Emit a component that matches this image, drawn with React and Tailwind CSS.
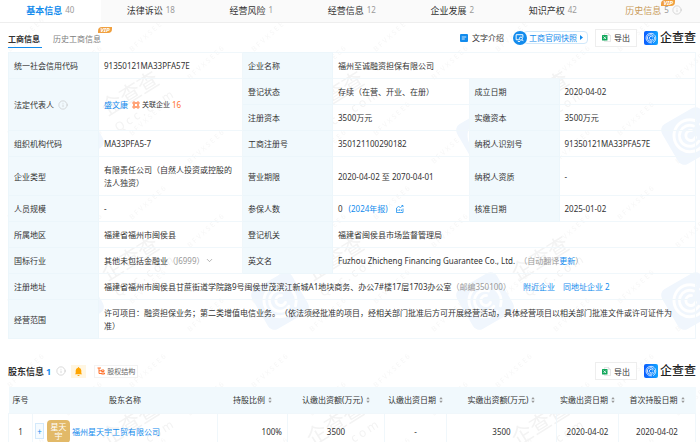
import { ChevronDown, Info } from "lucide-react";

const tabs = [
  { name: "基本信息", count: 40, active: true },
  { name: "法律诉讼", count: 18 },
  { name: "经营风险", count: 1 },
  { name: "经营信息", count: 12 },
  { name: "企业发展", count: 2 },
  { name: "知识产权", count: 42 },
  { name: "历史信息", count: 5, vip: true },
];

const holderColumns = [
  { name: "序号", width: "w-6" },
  { name: "股东名称", width: "w-[185px]" },
  { name: "持股比例", width: "w-[70px]", sortable: true },
  { name: "认缴出资额(万元)", width: "w-[97px]", sortable: true },
  { name: "认缴出资日期", width: "w-[62px]", sortable: true },
  { name: "实缴出资额(万元)", width: "w-[110px]", sortable: true },
  { name: "实缴出资日期", width: "w-[62px]", sortable: true },
  { name: "首次持股日期", width: "", sortable: true },
];

const VipBadge = () => (
  <span className="flex h-[6px] w-[14px] items-center justify-center rounded-tl-sm rounded-br-sm bg-[#f0a040] text-[6px] leading-none font-bold text-white italic">
    VIP
  </span>
);

const InfoIcon = () => (
  <Info className="size-[10px] shrink-0 text-[#c4c4c4]" strokeWidth={1.5} />
);

const LogoMark = () => (
  <svg viewBox="0 0 28 28" className="size-[14px]" fill="none" aria-hidden="true">
    <defs>
      <linearGradient id="mark" x1="0" y1="0" x2="1" y2="0">
        <stop offset="0" stopColor="#0a5cff" />
        <stop offset="1" stopColor="#12a5ff" />
      </linearGradient>
    </defs>
    <rect width="28" height="28" rx="4" fill="url(#mark)" />
    <g stroke="#fff" strokeWidth="1.6" strokeLinecap="round">
      <path d="M20 6.500A9.800 9.800 0 1 0 15 23.800" />
      <path d="M19 10A6.800 6.800 0 1 0 15 20.700" />
      <path d="M17.500 12A3.800 3.800 0 1 0 17.500 16.500" />
      <path d="M22 9C25 14 23.500 20 19 22.800" />
      <path d="M17.500 20C20.500 18.500 21.500 16 21 13" />
    </g>
  </svg>
);

const Brand = () => (
  <a href="#home" className="flex items-center gap-[2px] text-[#222]">
    <LogoMark />
    <span className="text-[12px] leading-[14px] font-medium">企查查</span>
  </a>
);

const ExportButton = () => (
  <button
    type="button"
    className="flex h-[18px] w-[42px] items-center justify-center gap-[3px] border border-[#eee] bg-white"
  >
    <svg viewBox="0 0 18 18" className="size-[9px]" aria-hidden="true">
      <path d="M5 1h8l4 4v12H5z" fill="#fff" stroke="#cfcfcf" />
      <path d="M13 1v4h4" fill="none" stroke="#cfcfcf" />
      <rect y="4" width="11" height="11" rx="1" fill="#12a75c" />
      <path d="m3 7 5 5M8 7l-5 5" stroke="#fff" strokeWidth="1.6" />
    </svg>
    <span>导出</span>
  </button>
);

const Watermark = () => (
  <svg
    className="pointer-events-none absolute inset-0 size-full"
    aria-hidden="true"
  >
    <defs>
      <pattern id="brand" x="75" y="54" width="205" height="165" patternUnits="userSpaceOnUse">
        <g transform="translate(58 44) rotate(-32)" fill="#f3f3f3" textAnchor="middle">
          <text y="2" fontSize="21">企查查</text>
          <text x="4" y="21" fontSize="12" letterSpacing="3">Qcc.com</text>
        </g>
      </pattern>
      <pattern id="stamp" x="177" y="54" width="205" height="165" patternUnits="userSpaceOnUse">
        <g transform="translate(103 82) rotate(-30)">
          <rect x="-23" y="-23" width="46" height="46" rx="7" fill="#f0f6fd" />
          <g fill="none" stroke="#fff" strokeWidth="3" strokeLinecap="round">
            <path d="M12-11A16 16 0 1 0 5 15" />
            <path d="M8-7A10.500 10.500 0 1 0 5 9" />
            <path d="M4-4A5 5 0 1 0 4 4" />
            <path d="M15-5A16 16 0 0 1 11 12" />
          </g>
        </g>
      </pattern>
      <pattern id="code" width="122" height="84" patternUnits="userSpaceOnUse">
        <g fill="#f6f6f6" fontSize="7" letterSpacing="2">
          <text transform="translate(10 52) rotate(-42)">BFVXSEE6</text>
          <text transform="translate(68 80) rotate(-42)">BFVXSEE6</text>
        </g>
      </pattern>
    </defs>
    <rect width="100%" height="100%" fill="url(#code)" />
    <rect y="53" width="100%" height="286" fill="url(#stamp)" />
    <rect y="53" width="100%" height="286" fill="url(#brand)" />
    <rect y="412" width="100%" height="100%" fill="url(#brand)" />
  </svg>
);

const Label = ({ children, ...props }) => (
  <th
    scope="row"
    className="border border-[#ecf6fb] bg-[#f1f9fd] px-[5px] py-[6px] text-left font-normal"
    {...props}
  >
    {children}
  </th>
);

const Value = ({ children, ...props }) => (
  <td className="border border-[#f0f7fb] py-[6px] pr-2 pl-[5px]" {...props}>
    {children}
  </td>
);

const SortArrows = () => (
  <svg viewBox="0 0 8 14" className="h-[6px] w-[4px]" fill="#999" aria-hidden="true">
    <path d="M4 0 8 5H0zM4 14 0 9h8z" />
  </svg>
);

const CompanyTable = () => (
  <table className="w-full table-fixed border-collapse">
    <colgroup>
      <col className="w-[90px]" />
      <col className="w-[144px]" />
      <col className="w-[90px]" />
      <col />
      <col className="w-[90px]" />
      <col />
    </colgroup>
    <tbody>
      <tr>
        <Label>统一社会信用代码</Label>
        <Value>91350121MA33PFA57E</Value>
        <Label>企业名称</Label>
        <Value colSpan={3}>福州至诚融资担保有限公司</Value>
      </tr>
      <tr>
        <Label rowSpan={2}>
          <span className="flex items-center gap-1">
            法定代表人 <InfoIcon />
          </span>
        </Label>
        <Value rowSpan={2}>
          <div className="flex items-center gap-1">
            <a href="#person" className="text-[#128bed]">盛文康</a>
            <a href="#related" className="flex items-center gap-[2px] text-[7px]">
              <svg viewBox="0 0 16 16" className="size-[8px]" fill="none" stroke="#ff722d" strokeWidth="1.6" aria-hidden="true">
                <path d="M2 2h4v4H2zM10 2h4v4h-4zM2 10h4v4H2zM10 10h4v4h-4zM6 4h4M6 12h4M4 6v4M12 6v4" />
              </svg>
              <span>关联企业</span>
              <span className="text-[8px] text-[#ff722d]">16</span>
            </a>
          </div>
        </Value>
        <Label>登记状态</Label>
        <Value>存续（在营、开业、在册）</Value>
        <Label>成立日期</Label>
        <Value>2020-04-02</Value>
      </tr>
      <tr>
        <Label>注册资本</Label>
        <Value>3500万元</Value>
        <Label>实缴资本</Label>
        <Value>3500万元</Value>
      </tr>
      <tr>
        <Label>组织机构代码</Label>
        <Value>MA33PFA5-7</Value>
        <Label>工商注册号</Label>
        <Value>350121100290182</Value>
        <Label>纳税人识别号</Label>
        <Value>91350121MA33PFA57E</Value>
      </tr>
      <tr>
        <Label>企业类型</Label>
        <Value>有限责任公司（自然人投资或控股的法人独资）</Value>
        <Label>营业期限</Label>
        <Value>2020-04-02 至 2070-04-01</Value>
        <Label>纳税人资质</Label>
        <Value>-</Value>
      </tr>
      <tr>
        <Label>人员规模</Label>
        <Value>-</Value>
        <Label>参保人数</Label>
        <Value>
          <div className="flex items-center">
            <span>0</span>
            <a href="#report" className="ml-[6px] text-[#128bed]">(2024年报)</a>
            <svg viewBox="0 0 16 16" className="ml-2 size-[8px]" fill="none" stroke="#128bed" strokeWidth="1.5" aria-hidden="true">
              <path d="M1 6v9h13V7M4 12V9M7.500 12V8M11 12V9M1 6l4-3 4 2 5-4M11 1h3v3" />
            </svg>
          </div>
        </Value>
        <Label>核准日期</Label>
        <Value>2025-01-02</Value>
      </tr>
      <tr>
        <Label>所属地区</Label>
        <Value>福建省福州市闽侯县</Value>
        <Label>登记机关</Label>
        <Value colSpan={3}>福建省闽侯县市场监督管理局</Value>
      </tr>
      <tr>
        <Label>国标行业</Label>
        <Value>
          <div className="flex items-center">
            其他未包括金融业
            <span className="text-[#999]">（J6999）</span>
            <ChevronDown className="size-[9px] text-[#999]" strokeWidth={2} />
          </div>
        </Value>
        <Label>英文名</Label>
        <Value colSpan={3}>
          Fuzhou Zhicheng Financing Guarantee Co., Ltd.
          <span className="ml-1 text-[#999]">
            （自动翻译<a href="#update" className="text-[#128bed]">更新</a>）
          </span>
        </Value>
      </tr>
      <tr>
        <Label>注册地址</Label>
        <Value colSpan={5}>
          福建省福州市闽侯县甘蔗街道学院路9号闽侯世茂滨江新城A1地块商务、办公7#楼17层1703办公室
          <span className="text-[#999]">（邮编350100）</span>
          <a href="#nearby" className="ml-3 text-[#128bed]">附近企业</a>
          <a href="#same-address" className="ml-2 text-[#128bed]">同地址企业 2</a>
        </Value>
      </tr>
      <tr>
        <Label>经营范围</Label>
        <Value colSpan={5}>
          <p className="pr-1">
            许可项目：融资担保业务；第二类增值电信业务。（依法须经批准的项目，经相关部门批准后方可开展经营活动，具体经营项目以相关部门批准文件或许可证件为准）
          </p>
        </Value>
      </tr>
    </tbody>
  </table>
);

const HolderTable = () => (
  <table className="w-full table-fixed border-collapse text-center">
    <thead className="bg-[#f1f9fd]">
      <tr className="h-[26px]">
        {holderColumns.map((col) => (
          <th key={col.name} scope="col" className={`${col.width} p-0 font-normal whitespace-nowrap`}>
            <span className="inline-flex items-center gap-[3px]">
              {col.name}
              {col.sortable && <SortArrows />}
            </span>
          </th>
        ))}
      </tr>
    </thead>
    <tbody>
      <tr className="h-9 *:border *:border-[#f0f7fb]">
        <td>1</td>
        <td>
          <div className="flex items-center pl-[2px]">
            <button
              type="button"
              aria-label="展开"
              className="flex h-4 w-[9px] items-center justify-center border border-[#d3e9fb] bg-[#f5fbff] text-[#128bed]"
            >
              +
            </button>
            <span className="ml-[3px] flex size-[23px] items-center justify-center rounded-sm bg-[#e2b968] text-[8px] leading-[9px] text-white">
              <span className="w-4">星天宇</span>
            </span>
            <a href="#holder" className="ml-[2px] text-[#128bed]">福州星天宇工贸有限公司</a>
          </div>
        </td>
        <td className="pr-[5px] text-right">100%</td>
        <td>3500</td>
        <td>-</td>
        <td>3500</td>
        <td>2020-04-02</td>
        <td>2020-04-02</td>
      </tr>
    </tbody>
  </table>
);

export default function App() {
  return (
    <div className="relative h-screen overflow-hidden bg-white font-['Noto_Sans','Noto_Sans_CJK_SC',sans-serif] text-[8px] leading-[13px] text-[#333] [text-spacing-trim:space-all]">
      <Watermark />
      <div className="relative">
        <nav className="flex h-[23px] border-b border-[#eee]">
          {tabs.map((tab) => (
            <a
              key={tab.name}
              href={`#${tab.name}`}
              className={`flex items-center justify-center gap-[3px] pb-[2px] text-[9px] ${
                tab.active
                  ? "flex-1 font-bold text-[#128bed]"
                  : tab.vip
                    ? "w-[97px] bg-[#fafafa] pl-1 text-[#c99a5b]"
                    : "flex-1 bg-[#fafafa]"
              }`}
            >
              <span className="relative">
                {tab.name}
                {tab.vip && (
                  <span className="absolute -top-1 left-full">
                    <VipBadge />
                  </span>
                )}
              </span>
              <span className="text-[8px] leading-[8px] font-normal text-[#999]">{tab.count}</span>
              {tab.vip && <InfoIcon />}
            </a>
          ))}
        </nav>

        <main className="pr-1 pl-2">
          <div className="flex h-[29px] items-center justify-between">
            <div className="flex items-end gap-[11px] pt-1">
              <a href="#registration" className="border-b border-[#128bed] pr-[2px] pb-[2px] font-bold">工商信息</a>
              <a href="#registration-history" className="relative pb-[3px] text-[#808080]">
                历史工商信息
                <span className="absolute -top-[5px] -right-[11px]">
                  <VipBadge />
                </span>
              </a>
            </div>
            <div className="flex items-center gap-[7px]">
              <a href="#intro" className="mr-[2px] flex items-center gap-1">
                <svg viewBox="0 0 16 16" className="size-[8px]" aria-hidden="true">
                  <rect width="16" height="16" rx="2" fill="#128bed" />
                  <path d="M3.500 6h9M3.500 10h6" stroke="#fff" strokeWidth="1.6" />
                </svg>
                文字介绍
              </a>
              <a href="#snapshot" className="flex items-center text-[#128bed]">
                <span className="z-10 flex size-[14px] items-center justify-center rounded-full bg-[#128bed]">
                  <svg viewBox="0 0 16 16" className="size-[9px]" fill="none" stroke="#fff" strokeWidth="1.7" aria-hidden="true">
                    <path d="M7 12H2V3h12v5M5 15h4" />
                    <circle cx="10.500" cy="10" r="2.800" />
                    <path d="m12.500 12 2.500 2.500" />
                  </svg>
                </span>
                <span className="-ml-1 flex h-[13px] items-center gap-[3px] rounded-sm border border-[#d0e8fb] pr-1 pl-[5px]">
                  工商官网快照
                  <svg viewBox="0 0 6 10" className="h-[5px] w-[3px]" fill="#128bed" aria-hidden="true">
                    <path d="M0 0 6 5 0 10z" />
                  </svg>
                </span>
              </a>
              <ExportButton />
              <Brand />
            </div>
          </div>

          <CompanyTable />

          <div className="mt-4 flex h-8 items-center justify-between">
            <div className="flex items-center">
              <h2 className="flex gap-[2px] text-[9px] font-bold">
                股东信息<span className="text-[#128bed]">1</span>
              </h2>
              <span className="mx-[5px]">
                <InfoIcon />
              </span>
              <button type="button" aria-label="订阅提醒" className="flex h-[13px] w-[15px] items-center justify-center bg-[#fff6e2]">
                <svg viewBox="0 0 16 16" className="size-[9px]" fill="#ffa500" aria-hidden="true">
                  <path d="M8 0a1 1 0 0 1 1 1.200A5 5 0 0 1 13 6v5l1.500 2h-13L3 11V6a5 5 0 0 1 4-4.800A1 1 0 0 1 8 0zM6 14h4a2 2 0 0 1-4 0z" />
                </svg>
              </button>
              <a href="#structure" className="ml-2 flex h-[13px] items-center gap-[2px] border border-[#f3f3f3] px-[2px] text-[7px] text-[#666]">
                <svg viewBox="0 0 16 16" className="size-[8px]" fill="none" stroke="#ff722d" strokeWidth="2" aria-hidden="true">
                  <path d="M1 2h7M4 2v11h5M4 7.500h5M9 6h5v3H9zM9 12h6v2H9z" />
                </svg>
                股权结构
              </a>
            </div>
            <div className="flex items-center gap-[7px]">
              <ExportButton />
              <Brand />
            </div>
          </div>

          <HolderTable />
        </main>
      </div>
    </div>
  );
}
